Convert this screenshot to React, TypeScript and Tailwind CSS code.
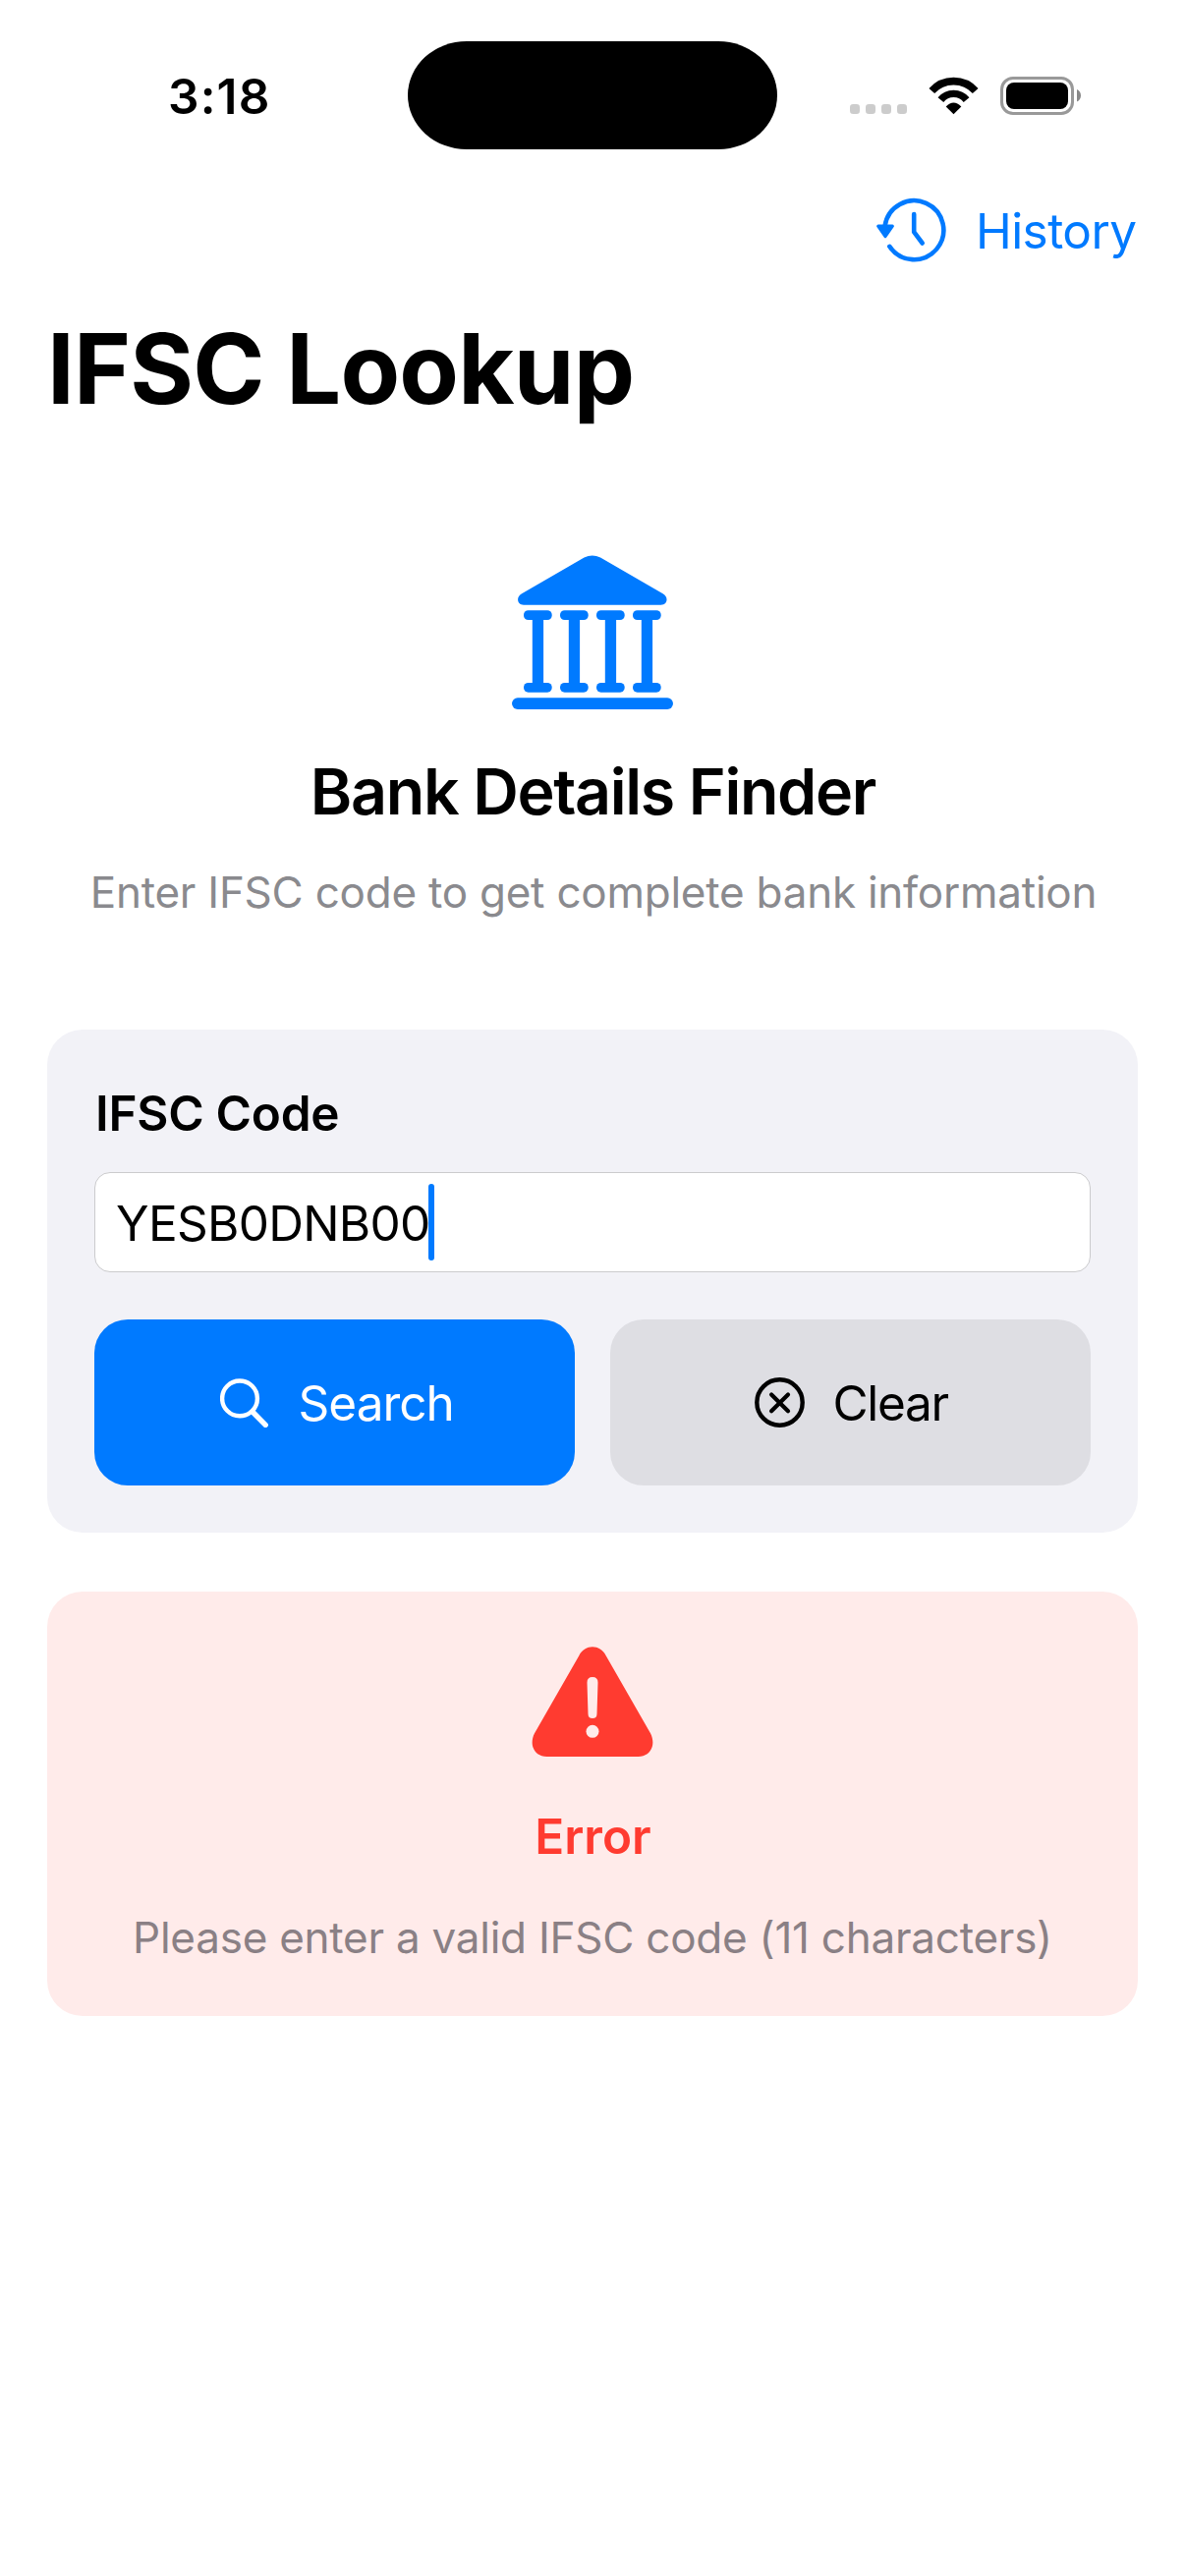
function StatusBar() {
  return (
    <div className="grid h-[177px] grid-cols-[415px_376px_1fr] pt-[41px]">
      <div className="flex h-[113px] items-center pl-[171px]">
        <span className="text-[49.5px] leading-[60px] font-semibold tracking-[1.16px]">3:18</span>
      </div>
      <div className="mt-px h-[110px] rounded-[60px/55px] bg-black" />
      <div className="flex h-[113px] items-center pl-[74px]">
        <svg className="mt-[27px] h-[10px] w-[58px]" viewBox="0 0 58 10" fill="#cccccc">
          <rect x="0" width="10" height="10" rx="3.3" />
          <rect x="16" width="10" height="10" rx="3.3" />
          <rect x="32" width="10" height="10" rx="3.3" />
          <rect x="48" width="10" height="10" rx="3.3" />
        </svg>
        <svg className="ml-[22px] h-[39px] w-[51px]" viewBox="0 0 51 39" fill="none">
          <path d="M3.3 14.6A29.7 29.7 0 0 1 47.7 14.6" stroke="#000" strokeWidth="7.6" />
          <path d="M12.4 23.6A16.9 16.9 0 0 1 38.6 23.6" stroke="#000" strokeWidth="7.4" />
          <path d="M17.7 30.4Q25.5 22.4 33.3 30.4L25.5 38.3Z" fill="#000" />
        </svg>
        <svg className="ml-[22px] h-[39px] w-[83px]" viewBox="0 0 83 39" fill="none">
          <rect x="1.5" y="1.5" width="72" height="36" rx="11.5" stroke="#999999" strokeWidth="3" />
          <rect x="6" y="6" width="63" height="27" rx="8" fill="#000" />
          <path d="M78 13C80.5 14 82 16.5 82 19.3S80.5 24.6 78 25.6Z" fill="#888888" />
        </svg>
      </div>
    </div>
  );
}

function HistoryIcon() {
  return (
    <svg
      className="h-[67px] w-[73px]"
      viewBox="891 201 73 67"
      fill="none"
      stroke="#007aff"
      strokeWidth="4.6"
      strokeLinecap="round"
      strokeLinejoin="round"
    >
      <path d="M900.6 230A30 30 0 1 1 905.3 250.8" />
      <path d="M930.2 218V236.2L938.7 247.5" />
      <path d="M893.7 230.2H908.3L901 240.7Z" fill="#007aff" strokeWidth="3.2" />
    </svg>
  );
}

const columns = [533, 570, 607, 644];

function BankIcon() {
  return (
    <svg className="h-[157px] w-[164px]" viewBox="521 565 164 157" fill="#007aff">
      <path d="M533 615.8C525.8 615.8 525.2 607.2 531 604.3L594.5 567.5Q602.8 563.3 611.1 567.5L674.6 604.3C680.4 607.2 679.8 615.8 672.6 615.8Z" />
      {columns.map((x) => (
        <g key={x}>
          <rect x={x} y="621.2" width="28.7" height="9.8" rx="4.6" />
          <rect x={x + 8.8} y="628" width="11.3" height="70" />
          <rect x={x} y="694.9" width="28.7" height="9.8" rx="4.6" />
        </g>
      ))}
      <rect x="521" y="710.2" width="164" height="11.8" rx="5.9" />
    </svg>
  );
}

function SearchIcon() {
  return (
    <svg className="h-[50px] w-[50px]" viewBox="224 1402.5 50 50" fill="none" stroke="#fff" strokeLinecap="round">
      <circle cx="244" cy="1422.9" r="17.9" strokeWidth="4.4" />
      <path d="M257.5 1437L270.2 1449.9" strokeWidth="5.4" />
    </svg>
  );
}

function ClearIcon() {
  return (
    <svg className="h-[51px] w-[51px]" viewBox="0 0 51 51" fill="none" stroke="#000" strokeLinecap="round">
      <circle cx="25.5" cy="25.5" r="23.2" strokeWidth="4.4" />
      <path d="M17.1 17.4L34 34.3M34 17.4L17.1 34.3" strokeWidth="4.2" />
    </svg>
  );
}

function WarningIcon() {
  return (
    <svg className="h-[112px] w-[124px]" viewBox="541.5 1676 124 112">
      <path
        d="M557 1788C544.5 1788 538.5 1776 544.5 1764.2L589.8 1685.2C595.8 1673.4 611.2 1673.4 617.2 1685.2L662.5 1764.2C668.5 1776 662.5 1788 650 1788Z"
        fill="#ff3b30"
      />
      <path
        d="M598 1712.5Q598 1707 603.5 1707T609 1712.5L608 1744.5Q608 1749 603.5 1749T599 1744.5Z"
        fill="#ffebea"
      />
      <circle cx="603.5" cy="1762.3" r="6.5" fill="#ffebea" />
    </svg>
  );
}

export default function App() {
  return (
    <div className="h-[2622px] w-[1206px] overflow-hidden bg-white font-['Inter',sans-serif] whitespace-nowrap text-black">
      <StatusBar />

      <nav className="flex h-[115px] items-center gap-[29px] pl-[891px] text-[#007aff]">
        <HistoryIcon />
        <span className="text-[49.5px] leading-[60px] tracking-[-0.58px]">History</span>
      </nav>

      <h1 className="mt-[23px] pl-12 text-[99px] leading-[120px] font-bold tracking-[-0.82px]">IFSC Lookup</h1>

      <header className="mt-[130px] flex flex-col items-center">
        <BankIcon />
        <h2 className="mt-[45px] pl-px text-[64.5px] leading-[79px] font-semibold tracking-[-1.33px]">
          Bank Details Finder
        </h2>
        <p className="mt-[35px] pl-[2px] text-[44px] leading-[54px] tracking-[-0.24px] text-[#8a8a8e]">
          Enter IFSC code to get complete bank information
        </p>
      </header>

      <section className="mx-12 mt-[113px] flex h-[512px] flex-col rounded-[36px] bg-[#f2f2f7] px-12 pt-[55px]">
        <label className="pl-px text-[49.5px] leading-[60px] font-semibold tracking-[-0.27px]">IFSC Code</label>
        <div className="mt-[30px] flex h-[102px] items-center rounded-[16px] border border-[#cbcbcd] bg-white pl-[21px]">
          <span className="pt-[2px] text-[49.5px] leading-[60px] tracking-[-0.71px]">YESB0DNB00</span>
          <span className="-ml-[1.5px] h-[78px] w-[6px] rounded-[3px] bg-[#007aff]" />
        </div>
        <div className="mt-12 grid grid-cols-2 gap-9">
          <button className="flex h-[169px] items-center gap-[29.5px] rounded-[34px] bg-[#007aff] pl-32 text-white">
            <SearchIcon />
            <span className="text-[49.5px] leading-[60px] tracking-[-0.98px]">Search</span>
          </button>
          <button className="flex h-[169px] items-center gap-[28.5px] rounded-[34px] bg-[#dedee3] pl-[147px]">
            <ClearIcon />
            <span className="text-[49.5px] leading-[60px] tracking-[-1.3px]">Clear</span>
          </button>
        </div>
      </section>

      <section className="mx-12 mt-[60px] flex h-[432px] flex-col items-center rounded-[36px] bg-[#ffebea] pt-14">
        <WarningIcon />
        <h3 className="mt-[51px] pl-px text-[49.5px] leading-[60px] font-semibold text-[#ff3b30]">Error</h3>
        <p className="mt-[46px] text-[44px] leading-[54px] tracking-[-0.24px] text-[#8a8085]">
          Please enter a valid IFSC code (11 characters)
        </p>
      </section>
    </div>
  );
}
